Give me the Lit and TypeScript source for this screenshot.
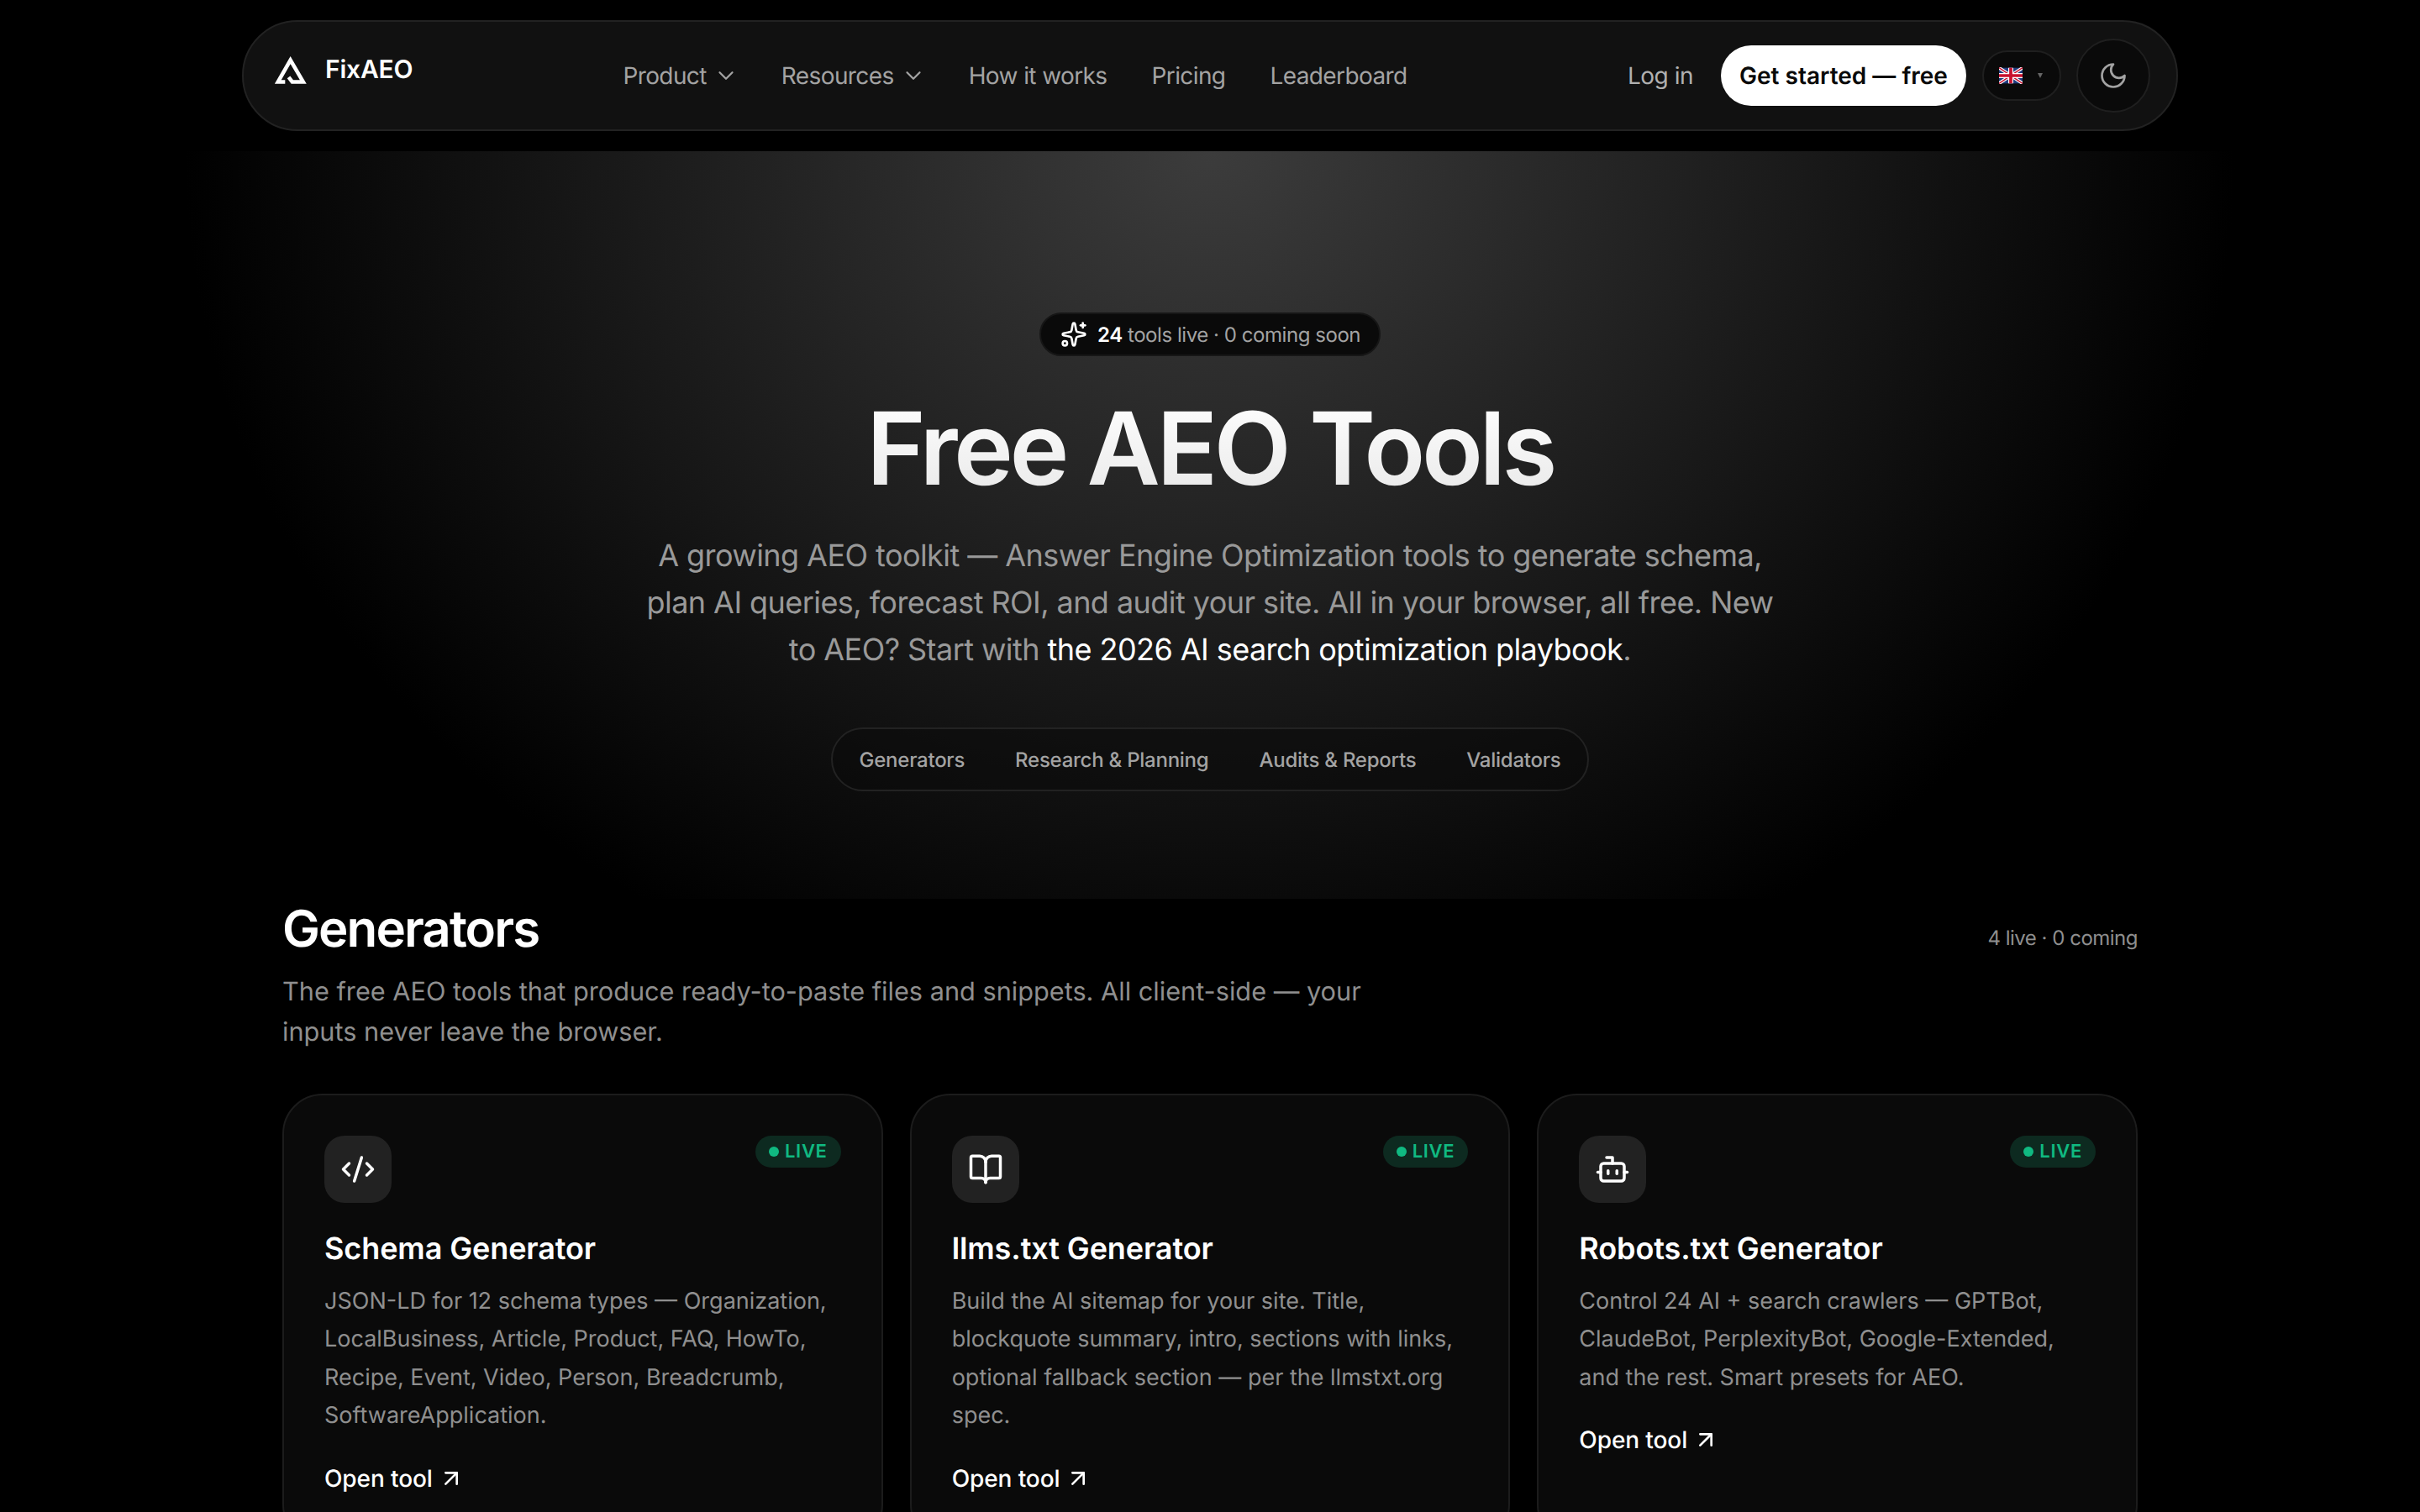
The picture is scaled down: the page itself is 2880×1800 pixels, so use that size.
import { LitElement, html, css, svg } from "lit";
import { customElement } from "lit/decorators.js";

const icon = (body: unknown, size: number, sw = 2) => html`<svg class="ic" width=${size} height=${size} viewBox="0 0 24 24" fill="none" stroke="currentColor" stroke-width=${sw} stroke-linecap="round" stroke-linejoin="round">${body}</svg>`;

const chevron = svg`<path d="m6 9 6 6 6-6"/>`;
const arrow = svg`<path d="M7 7h10v10"/><path d="M7 17 17 7"/>`;
const moon = svg`<path d="M12 3a6 6 0 0 0 9 9 9 9 0 1 1-9-9Z"/>`;
const sparkles = svg`<path d="M11.017 2.814a1 1 0 0 1 1.966 0l1.051 5.558a2 2 0 0 0 1.594 1.594l5.558 1.051a1 1 0 0 1 0 1.966l-5.558 1.051a2 2 0 0 0-1.594 1.594l-1.051 5.558a1 1 0 0 1-1.966 0l-1.051-5.558a2 2 0 0 0-1.594-1.594l-5.558-1.051a1 1 0 0 1 0-1.966l5.558-1.051a2 2 0 0 0 1.594-1.594z"/><path d="M20 2v4"/><path d="M22 4h-4"/><circle cx="4" cy="20" r="2"/>`;
const codeXml = svg`<path d="m18 16 4-4-4-4"/><path d="m6 8-4 4 4 4"/><path d="m14.5 4-5 16"/>`;
const bookOpen = svg`<path d="M12 7v14"/><path d="M3 18a1 1 0 0 1-1-1V4a1 1 0 0 1 1-1h5a4 4 0 0 1 4 4 4 4 0 0 1 4-4h5a1 1 0 0 1 1 1v13a1 1 0 0 1-1 1h-6a3 3 0 0 0-3 3 3 3 0 0 0-3-3z"/>`;
const bot = svg`<path d="M12 8V4H8"/><rect width="16" height="12" x="4" y="8" rx="2"/><path d="M2 14h2"/><path d="M20 14h2"/><path d="M15 13v2"/><path d="M9 13v2"/>`;

const cards = [
  { icon: codeXml, title: "Schema Generator", desc: "JSON-LD for 12 schema types — Organization, LocalBusiness, Article, Product, FAQ, HowTo, Recipe, Event, Video, Person, Breadcrumb, SoftwareApplication." },
  { icon: bookOpen, title: "llms.txt Generator", desc: "Build the AI sitemap for your site. Title, blockquote summary, intro, sections with links, optional fallback section — per the llmstxt.org spec." },
  { icon: bot, title: "Robots.txt Generator", desc: "Control 24 AI + search crawlers — GPTBot, ClaudeBot, PerplexityBot, Google-Extended, and the rest. Smart presets for AEO." },
];

@customElement("app-root")
export class AppRoot extends LitElement {
  static styles = css`
    :host {
      display: block;
      height: 1800px;
      overflow: hidden;
      background: #000;
      color: #fff;
      font-family: Inter, "Liberation Sans", sans-serif;
      text-rendering: geometricPrecision;
    }
    * { box-sizing: border-box; }
    .ic { display: block; flex: none; }
    a { color: inherit; text-decoration: none; }

    .nav {
      margin: 24px 288px 0;
      height: 132px;
      border: 2px solid #222;
      border-radius: 66px;
      background: #111;
      display: flex;
      align-items: center;
      padding: 0 31px 0 37px;
    }
    .logo { display: flex; align-items: center; gap: 22px; padding-bottom: 14px; font-size: 30px; font-weight: 600; letter-spacing: -0.2px; }
    .links { display: flex; align-items: center; gap: 53px; margin-left: 250px; font-size: 28px; letter-spacing: -0.6px; color: #a3a3a3; }
    .links a { display: flex; align-items: center; gap: 8px; }
    .links .ic { margin-right: -2px; }
    .right { margin-left: auto; display: flex; align-items: center; }
    .login { font-size: 28px; letter-spacing: -0.5px; color: #b0b0b0; margin-right: 33px; }
    .cta { height: 72px; width: 292px; border-radius: 36px; background: #fff; color: #0a0a0a; font-size: 28px; font-weight: 600; display: flex; align-items: center; justify-content: center; }
    .lang { margin-left: 19px; width: 94px; height: 60px; border-radius: 30px; border: 2px solid #1f1f1f; background: #0a0a0a; display: flex; align-items: center; padding-left: 18px; gap: 18px; }
    .tri { width: 0; height: 0; border-left: 3.5px solid transparent; border-right: 3.5px solid transparent; border-top: 6px solid #666; }
    .theme { margin-left: 18px; width: 88px; height: 88px; border-radius: 50%; border: 2px solid #1f1f1f; background: #0a0a0a; display: flex; align-items: center; justify-content: center; color: #a3a3a3; }

    .hero {
      margin-top: 24px;
      height: 890px;
      padding-top: 192px;
      display: flex;
      flex-direction: column;
      align-items: center;
      background: radial-gradient(ellipse 1220px 1070px at 50% 0, #3c3c3c 0%, #000 100%);
    }
    .pill { height: 52px; width: 406px; border-radius: 26px; border: 2px solid #161616; background: #0a0a0a; display: flex; align-items: center; padding-left: 23px; gap: 12px; font-size: 24px; letter-spacing: -0.45px; color: #a3a3a3; }
    .pill .ic { color: #fff; }
    .pill b { color: #fff; font-weight: 600; }
    h1 { margin: 44px 0 0; font-size: 120px; line-height: 132px; font-weight: 600; letter-spacing: -4.5px; color: #fff; background: linear-gradient(180deg, #fff, #e8e8e8); -webkit-background-clip: text; background-clip: text; -webkit-text-fill-color: transparent; }
    .lead { margin: 34px 0 0; width: 1344px; text-align: center; font-size: 36px; line-height: 55.8px; letter-spacing: -0.56px; color: #999; }
    .lead a { color: #fff; }
    .filter { margin-top: 65px; height: 76px; border-radius: 38px; border: 2px solid #222; background: rgba(10,10,10,0.5); display: flex; align-items: center; padding: 0 32px; gap: 60px; font-size: 24px; font-weight: 500; letter-spacing: -0.25px; color: #a3a3a3; }

    .section { padding: 0 336px; }
    .head { display: flex; justify-content: space-between; align-items: flex-start; }
    h2 { margin: 2px 0 0; font-size: 60px; line-height: 68px; font-weight: 600; letter-spacing: -1.9px; }
    .count { font-size: 24px; letter-spacing: -0.5px; color: #8f8f8f; margin-top: 32px; }
    .sub { margin: 17px 0 0; width: 1344px; font-size: 30.7px; line-height: 48px; color: #8f8f8f; }

    .grid { margin-top: 49px; display: grid; grid-template-columns: repeat(3, 1fr); gap: 32px; }
    .card { border: 2px solid #1c1c1c; border-radius: 48px; background: #0a0a0a; padding: 48px 48px 60px; }
    .top { display: flex; justify-content: space-between; align-items: flex-start; }
    .box { width: 80px; height: 80px; border-radius: 24px; background: #222; display: flex; align-items: center; justify-content: center; color: #fff; }
    .live { height: 38px; border-radius: 19px; background: #0d2a20; color: #10b981; padding: 0 16px; display: flex; align-items: center; gap: 7px; font-size: 22px; font-weight: 600; letter-spacing: 0.7px; }
    .dot { width: 12px; height: 12px; border-radius: 50%; background: #10b981; }
    h3 { margin: 30px 0 0; font-size: 36px; line-height: 48px; font-weight: 600; letter-spacing: -0.1px; }
    .desc { margin: 16px 0 0; font-size: 27px; line-height: 45.4px; color: #8f8f8f; }
    .open { margin-top: 35px; display: flex; align-items: center; gap: 6px; font-size: 28px; font-weight: 500; letter-spacing: -0.1px; }
  `;

  render() {
    return html`
      <header class="nav">
        <a class="logo">
          <svg width="38" height="34" viewBox="55 55 108 95" fill="none" stroke="#fff" stroke-width="13" stroke-linejoin="miter"><path d="M90 143.5H66L108 70 151 143.5H114L102 128"/></svg>
          <span>FixAEO</span>
        </a>
        <nav class="links">
          <a>Product ${icon(chevron, 30, 1.8)}</a>
          <a>Resources ${icon(chevron, 30, 1.8)}</a>
          <a>How it works</a>
          <a>Pricing</a>
          <a>Leaderboard</a>
        </nav>
        <div class="right">
          <a class="login">Log in</a>
          <a class="cta">Get started — free</a>
          <div class="lang">
            <svg width="28" height="20" viewBox="0 0 60 40"><rect width="60" height="40" fill="#1f3a7d"/><path d="M0 0 60 40M60 0 0 40" stroke="#fff" stroke-width="8"/><path d="M0 0 60 40M60 0 0 40" stroke="#c8102e" stroke-width="3"/><path d="M30 0V40M0 20H60" stroke="#fff" stroke-width="13"/><path d="M30 0V40M0 20H60" stroke="#c8102e" stroke-width="8"/></svg>
            <span class="tri"></span>
          </div>
          <div class="theme">${icon(moon, 36, 1.8)}</div>
        </div>
      </header>

      <section class="hero">
        <div class="pill">${icon(sparkles, 32)}<span><b>24</b> tools live · 0 coming soon</span></div>
        <h1>Free AEO Tools</h1>
        <p class="lead">A growing AEO toolkit — Answer Engine Optimization tools to generate schema, plan AI queries, forecast ROI, and audit your site. All in your browser, all free. New to AEO? Start with <a>the 2026 AI search optimization playbook</a>.</p>
        <div class="filter"><a>Generators</a><a>Research &amp; Planning</a><a>Audits &amp; Reports</a><a>Validators</a></div>
      </section>

      <section class="section">
        <div class="head"><h2>Generators</h2><span class="count">4 live · 0 coming</span></div>
        <p class="sub">The free AEO tools that produce ready-to-paste files and snippets. All client-side — your inputs never leave the browser.</p>
        <div class="grid">
          ${cards.map((c) => html`
            <article class="card">
              <div class="top">
                <div class="box">${icon(c.icon, 42)}</div>
                <span class="live"><i class="dot"></i>LIVE</span>
              </div>
              <h3>${c.title}</h3>
              <p class="desc">${c.desc}</p>
              <a class="open">Open tool ${icon(arrow, 32)}</a>
            </article>
          `)}
        </div>
      </section>
    `;
  }
}
